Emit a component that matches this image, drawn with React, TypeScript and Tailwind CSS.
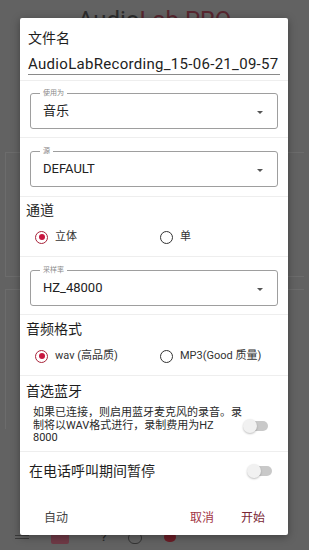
import React from "react";

const sans = "font-['Roboto','Noto_Sans_CJK_SC',sans-serif]";

function Divider() {
  return <div className="h-px bg-[#eeeeee]" />;
}

function OutlinedSelect({ label, value, mt }: { label: string; value: string; mt: string }) {
  return (
    <div className={`relative mx-[10px] flex h-[36px] items-center justify-between rounded-[3px] border border-[#9e9e9e] pl-[12px] pr-[14px] ${mt}`}>
      <span className="absolute -top-[6px] left-[9px] bg-white px-[3px] text-[7px] leading-[10px] text-[#8a8a8a]">
        {label}
      </span>
      <span className="text-[13px] leading-[16px] text-[#222]">{value}</span>
      <span className="mt-[3px] h-0 w-0 border-x-[3px] border-t-[3px] border-x-transparent border-t-[#555]" />
    </div>
  );
}

function Radio({ checked, label, width }: { checked?: boolean; label: string; width?: string }) {
  return (
    <div className={`flex items-center gap-[7px] ${width ?? ""}`}>
      <span
        className={`flex h-[13px] w-[13px] items-center justify-center rounded-full border-[1.5px] ${
          checked ? "border-[#a8233a]" : "border-[#333]"
        }`}
      >
        {checked && <span className="h-[6px] w-[6px] rounded-full bg-[#c8163f]" />}
      </span>
      <span className="text-[11px] leading-[14px] text-[#333]">{label}</span>
    </div>
  );
}

function Toggle() {
  return (
    <div className="relative h-[14px] w-[25px] shrink-0">
      <div className="absolute left-[4px] right-0 top-[2px] h-[10px] rounded-full bg-[#c9c9c9]" />
      <div className="absolute left-0 top-0 h-[14px] w-[14px] rounded-full bg-[#f1f1f1] shadow-[0_1px_2px_rgba(0,0,0,0.25)]" />
    </div>
  );
}

function Heading({ children, mt }: { children: React.ReactNode; mt: string }) {
  return (
    <div className={`h-[20px] pl-[6px] text-[14px] leading-[20px] text-[#1e1e1e] ${mt}`}>{children}</div>
  );
}

export default function App() {
  return (
    <div className={`relative h-[550px] w-[309px] overflow-hidden bg-[#626262] ${sans}`}>
      {/* app behind the dialog, dimmed */}
      <div className="flex h-full flex-col">
        <div className="pt-[6px] text-center text-[24px] leading-[28px]">
          <span className="text-[#2c2c2c]">Audio</span>
          <span className="text-[#57262f]">Lab PRO</span>
        </div>
        <div className="mx-[5px] mt-[118px] h-[125px] border-y border-l border-[#6c6c6c]" />
        <div className="mx-[5px] mt-[12px] h-[140px] border-l border-t border-[#6c6c6c]" />
        <div className="mt-auto flex h-[18px] items-start gap-[22px] pl-[15px]">
          <div className="mt-[3px] flex w-[14px] flex-col gap-[2px]">
            <span className="h-px bg-[#3a3a3a]" />
            <span className="h-px bg-[#3a3a3a]" />
          </div>
          <span className="h-[12px] w-[18px] rounded-[2px] bg-[#6f3a46]" />
          <span className="pl-[10px] text-[11px] font-bold leading-[12px] text-[#2a2a2a]">?</span>
          <span className="h-[12px] w-[14px] rounded-full border border-[#333]" />
          <span className="h-[10px] w-[12px] rounded-full bg-[#6b1d26]" />
        </div>
      </div>

      {/* dialog */}
      <div className="absolute left-[20px] top-[18px] flex h-[517px] w-[268px] flex-col rounded-[2px] bg-white shadow-[0_2px_8px_rgba(0,0,0,0.35)]">
        <div className="h-[62px] px-[8px] pt-[10px]">
          <div className="h-[20px] text-[14px] leading-[20px] text-[#1e1e1e]">文件名</div>
          <div className="mt-[6px] h-[21px] whitespace-nowrap border-b border-[#8a8a8a] text-[15px] leading-[20px] tracking-[0.3px] text-[#222]">
            AudioLabRecording_15-06-21_09-57
          </div>
        </div>
        <Divider />
        <div className="h-[56px]">
          <OutlinedSelect label="使用为" value="音乐" mt="mt-[12px]" />
        </div>
        <Divider />
        <div className="h-[58px]">
          <OutlinedSelect label="源" value="DEFAULT" mt="mt-[13px]" />
        </div>
        <Divider />
        <div className="h-[59px]">
          <Heading mt="mt-[3px]">通道</Heading>
          <div className="mt-[7px] flex h-[20px] items-center pl-[15px]">
            <Radio checked label="立体" width="w-[125px]" />
            <Radio label="单" />
          </div>
        </div>
        <Divider />
        <div className="h-[57px]">
          <OutlinedSelect label="采样率" value="HZ_48000" mt="mt-[13px]" />
        </div>
        <Divider />
        <div className="h-[60px]">
          <Heading mt="mt-[4px]">音频格式</Heading>
          <div className="mt-[7px] flex h-[20px] items-center pl-[15px]">
            <Radio checked label="wav (高品质)" width="w-[125px]" />
            <Radio label="MP3(Good 质量)" />
          </div>
        </div>
        <Divider />
        <div className="h-[75px]">
          <Heading mt="mt-[5px]">首选蓝牙</Heading>
          <div className="mt-[6px] flex items-center pl-[13px]">
            <p className="w-[210px] shrink-0 whitespace-nowrap text-[11px] leading-[12.5px] text-[#2a2a2a]">
              如果已连接，则启用蓝牙麦克风的录音。录
              <br />
              制将以WAV格式进行，录制费用为HZ
              <br />
              8000
            </p>
            <Toggle />
          </div>
        </div>
        <Divider />
        <div className="h-[49px]">
          <div className="mt-[9px] flex h-[20px] items-center justify-between pl-[9px] pr-[16px]">
            <span className="text-[14px] leading-[20px] text-[#1e1e1e]">在电话呼叫期间暂停</span>
            <Toggle />
          </div>
        </div>
        <div className="flex h-[34px] items-center pl-[24px] pr-[23px] text-[12px] leading-[16px]">
          <span className="text-[#444]">自动</span>
          <span className="ml-auto text-[#a23546]">取消</span>
          <span className="ml-[27px] text-[#7a2634]">开始</span>
        </div>
      </div>
    </div>
  );
}
